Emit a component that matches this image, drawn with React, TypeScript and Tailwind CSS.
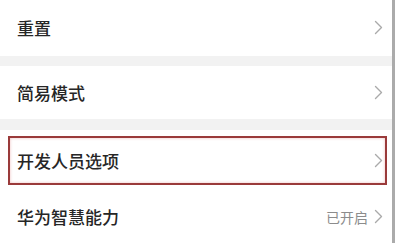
import React from "react";

const Chevron = () => (
  <svg width="9" height="15" viewBox="0 0 9 15" fill="none" className="shrink-0">
    <path d="M1.5 1.5 L7.5 7.5 L1.5 13.5" stroke="#aaaaaa" strokeWidth="1.4" strokeLinecap="round" strokeLinejoin="round" />
  </svg>
);

const font = { fontFamily: '"Noto Sans CJK SC", "Noto Sans", sans-serif' };

export default function App() {
  return (
    <div className="w-[400px] h-[243px] overflow-hidden bg-white flex" style={font}>
      <div className="w-[392px] flex flex-col">
        <div className="h-[57px] flex items-center justify-between pl-[17px] pr-[9px]">
          <span className="text-[17px] font-medium text-[#262626] leading-none">重置</span>
          <Chevron />
        </div>
        <div className="h-[11px] bg-[#f2f2f2]" />
        <div className="h-[54px] flex items-center justify-between pl-[17px] pr-[9px]">
          <span className="text-[17px] font-medium text-[#262626] leading-none">简易模式</span>
          <Chevron />
        </div>
        <div className="h-[11px] bg-[#f2f2f2]" />
        <div className="h-[62px] pt-[6px] pl-[8px] pr-[5px]">
          <div className="h-[49px] border-2 border-[#9a3a3a] shadow-[inset_0_0_3px_rgba(220,120,120,0.5)] flex items-center justify-between pl-[7px] pr-[2px]">
            <span className="text-[17px] font-medium text-[#262626] leading-none">开发人员选项</span>
            <Chevron />
          </div>
        </div>
        <div className="h-[54px] flex items-center justify-between pl-[17px] pr-[9px]">
          <span className="text-[17px] font-medium text-[#262626] leading-none">华为智慧能力</span>
          <div className="flex items-center gap-[6px]">
            <span className="text-[14px] text-[#8c8c8c] leading-none">已开启</span>
            <Chevron />
          </div>
        </div>
      </div>
      <div className="w-[3px] bg-[#ababab]" />
      <div className="flex-1 bg-white" />
    </div>
  );
}
